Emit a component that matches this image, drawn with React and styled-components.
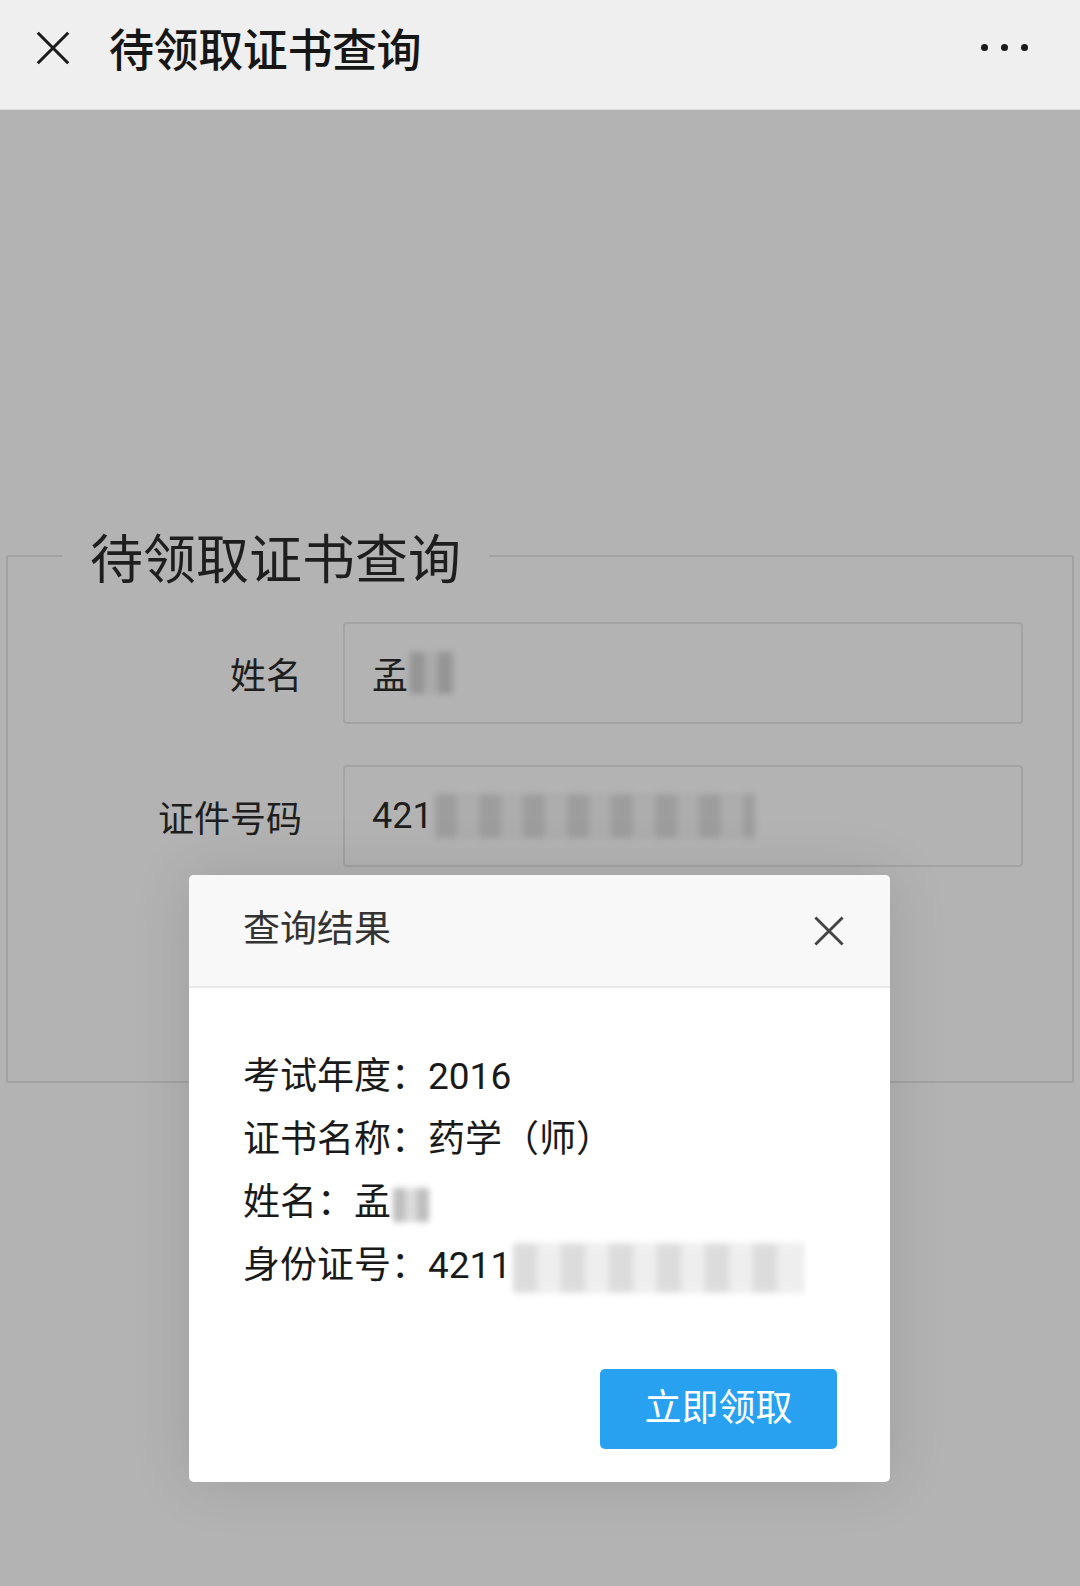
import React from 'react';
import styled, { createGlobalStyle } from 'styled-components';

const GlobalStyle = createGlobalStyle`
    html, body {
        margin: 0;
        padding: 0;
        background: #b3b3b3;
    }
    body {
        font-family: Roboto, "Noto Sans CJK SC", sans-serif;
    }
`;

const Page = styled.div`
    width: 1080px;
    min-height: 1586px;
    display: flex;
    flex-direction: column;
`;

const NavBar = styled.header`
    height: 110px;
    flex-shrink: 0;
    display: flex;
    align-items: center;
    padding: 0 52px 14px 34px;
    box-sizing: border-box;
    background: #efefef;
    border-bottom: 1px solid #dcdcdc;
`;

const NavTitle = styled.h1`
    margin: 0 0 0 37px;
    flex: 1;
    font-size: 45px;
    font-weight: 500;
    color: #161616;
    letter-spacing: -0.4px;
`;

const Dots = styled.div`
    display: flex;
    gap: 13px;
`;

const Dot = styled.span`
    width: 7px;
    height: 7px;
    border-radius: 50%;
    background: #1a1a1a;
`;

const Content = styled.main`
    position: relative;
    flex: 1;
    background: #b3b3b3;
    padding-top: 414px;
`;

const Fieldset = styled.fieldset`
    margin: 0 6px;
    padding: 0 0 214px;
    border: 2px solid #a2a2a2;
    border-radius: 2px;
    min-width: 0;
`;

const Legend = styled.legend`
    margin-left: 54px;
    padding: 0 28px;
    font-family: "Noto Sans CJK SC", sans-serif;
    font-size: 53px;
    line-height: 64px;
    color: #1e1e1e;
`;

const Form = styled.div`
    display: grid;
    grid-template-columns: 294px 680px;
    column-gap: 41px;
    row-gap: 41px;
    align-items: center;
    padding-top: 34px;
`;

const Label = styled.label`
    text-align: right;
    font-family: "Noto Sans CJK SC", sans-serif;
    font-size: 36px;
    color: #1e1e1e;
`;

const Field = styled.div`
    height: 102px;
    box-sizing: border-box;
    border: 2px solid #a3a3a3;
    border-radius: 4px;
    display: flex;
    align-items: center;
    padding-left: 27px;
    font-size: 36px;
    color: #1e1e1e;
    overflow: hidden;
`;

const Mosaic = styled.span`
    display: inline-block;
    width: ${p => p.$w}px;
    height: ${p => p.$h || 40}px;
    margin-left: ${p => p.$gap || 2}px;
    vertical-align: middle;
    background:
        repeating-linear-gradient(90deg, ${p => p.$a} 0 ${p => p.$step || 18}px, ${p => p.$b} ${p => p.$step || 18}px ${p => (p.$step || 18) * 2}px);
    filter: blur(3px);
    opacity: 0.85;
`;

const Dialog = styled.div`
    position: absolute;
    left: 189px;
    top: 765px;
    width: 701px;
    height: 607px;
    background: #fff;
    border-radius: 5px;
    box-shadow: 0 0 60px rgba(0, 0, 0, 0.12);
    display: flex;
    flex-direction: column;
    overflow: hidden;
    font-family: Roboto, "Noto Sans CJK SC", sans-serif;
`;

const DialogHead = styled.div`
    height: 113px;
    flex-shrink: 0;
    box-sizing: border-box;
    display: flex;
    align-items: center;
    justify-content: space-between;
    padding: 0 44px 0 54px;
    background: #f8f8f8;
    border-bottom: 2px solid #e8e8e8;
`;

const DialogTitle = styled.h2`
    margin: -10px 0 0;
    font-size: 37px;
    font-weight: 400;
    color: #333;
`;

const DialogBody = styled.div`
    flex: 1;
    padding: 57px 54px 0;
`;

const Line = styled.p`
    margin: 0;
    font-size: 37px;
    line-height: 63px;
    color: #1a1a1a;
    white-space: nowrap;
`;

const DialogFoot = styled.div`
    display: flex;
    justify-content: flex-end;
    padding: 0 53px 33px;
`;

const Button = styled.button`
    width: 237px;
    height: 80px;
    padding: 0 0 8px;
    border: none;
    border-radius: 5px;
    background: #29a1f1;
    color: #fff;
    font-family: "Noto Sans CJK SC", sans-serif;
    font-size: 37px;
    cursor: pointer;
`;

const CloseIcon = ({ size, stroke, width }) => (
    <svg width={size} height={size} viewBox="0 0 40 40">
        <path d="M4 4 L36 36 M36 4 L4 36" stroke={stroke} strokeWidth={width} fill="none" />
    </svg>
);

const App = () => {
    return (
        <>
        <GlobalStyle />
        <Page>
            <NavBar>
                <CloseIcon size={38} stroke="#1a1a1a" width={3.2} />
                <NavTitle>待领取证书查询</NavTitle>
                <Dots><Dot /><Dot /><Dot /></Dots>
            </NavBar>
            <Content>
                <Fieldset>
                    <Legend>待领取证书查询</Legend>
                    <Form>
                        <Label>姓名</Label>
                        <Field>
                            孟<Mosaic $w={44} $h={42} $a="#8f8f8f" $b="#a9a9a9" $step={14} />
                        </Field>
                        <Label>证件号码</Label>
                        <Field>
                            421<Mosaic $w={320} $h={44} $a="#9a9a9a" $b="#acacac" $step={22} />
                        </Field>
                    </Form>
                </Fieldset>
                <Dialog>
                    <DialogHead>
                        <DialogTitle>查询结果</DialogTitle>
                        <CloseIcon size={34} stroke="#444" width={3.4} />
                    </DialogHead>
                    <DialogBody>
                        <Line>考试年度：2016</Line>
                        <Line>证书名称：药学（师）</Line>
                        <Line>姓名：孟<Mosaic $w={36} $h={34} $a="#b2b2b2" $b="#d6d6d6" $step={12} /></Line>
                        <Line>身份证号：4211<Mosaic $w={290} $h={50} $a="#d6d6d6" $b="#ececec" $step={24} /></Line>
                    </DialogBody>
                    <DialogFoot>
                        <Button>立即领取</Button>
                    </DialogFoot>
                </Dialog>
            </Content>
        </Page>
        </>
    );
};

export default App;
